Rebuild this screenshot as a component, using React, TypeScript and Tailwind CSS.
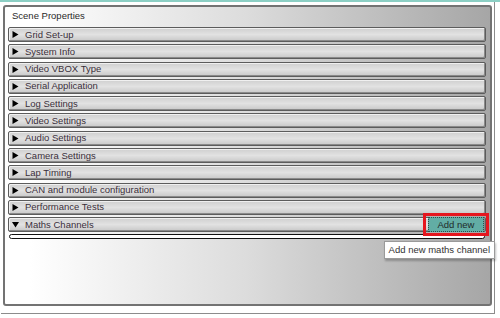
import React from 'react';

const sections = [
  "Grid Set-up",
  "System Info",
  "Video VBOX Type",
  "Serial Application",
  "Log Settings",
  "Video Settings",
  "Audio Settings",
  "Camera Settings",
  "Lap Timing",
  "CAN and module configuration",
  "Performance Tests",
];

const Arrow: React.FC<{ open?: boolean }> = ({ open }) => (
  <svg width="7" height="7" viewBox="0 0 7 7" className="ml-[3px] mr-[6px]">
    {open ? <path d="M0 1 L7 1 L3.5 6.5 Z" fill="#000" /> : <path d="M0.5 0 L6.5 3.5 L0.5 7 Z" fill="#000" />}
  </svg>
);

const Row: React.FC<{ label: string; open?: boolean; children?: React.ReactNode }> = ({ label, open, children }) => (
  <div className="relative h-[15px] flex items-center border border-[#5c5c5c] rounded-[2px] bg-linear-to-b from-[#cfcfcf] via-[#e2e2e2] to-[#c8c8c8] shadow-[inset_-1px_-1px_0_#8a8a8a,inset_1px_1px_0_#f0f0f0]">
    <Arrow open={open} />
    <span className="text-[9.5px] leading-[12px] text-[#3a2f3a]">{label}</span>
    {children}
  </div>
);

const App: React.FC = () => {
  return (
    <div className="w-[500px] h-[318px] bg-white overflow-hidden font-['Liberation_Sans',Arial,sans-serif]">
      {/* teal strip */}
      <div className="h-[2px] bg-[#8ccfc4]" />

      {/* outer frame */}
      <div className="ml-[1px] w-[494px] h-[312px] border-r border-b border-[#8c8c8c] pt-[3px] pl-[2px]">
        {/* panel */}
        <div className="w-[489px] h-[301px] border-2 border-[#737373] rounded-[3px] bg-linear-to-r from-white from-5% via-[#dcdcdc] via-50% to-[#a6a6a6]">
          <div className="h-[20px] pl-[7px] pt-[3px] text-[9.5px] leading-[12px] text-[#2a2a2a]">
            Scene Properties
          </div>

          <div className="flex flex-col gap-[2.3px] pl-[3px] pr-[4px]">
            {sections.map((s) => (
              <Row key={s} label={s} />
            ))}
            <Row label="Maths Channels" open>
              {/* highlighted button */}
              <div className="absolute right-[-4px] top-[-5px] w-[66px] h-[23px] border-[3px] border-[#e5161e] flex items-center justify-center z-10">
                <button className="w-[56px] h-[15px] bg-[#62ada5] border border-dotted border-[#2d4d4a] text-[9.5px] leading-[12px] text-[#1f2b2a]">
                  Add new
                </button>
              </div>
              {/* tooltip */}
              <div className="absolute right-[-10px] top-[23px] h-[18px] px-[4px] bg-white border border-[#9a9a9a] shadow-[1px_2px_2px_rgba(0,0,0,0.25)] text-[9.5px] leading-[16px] text-[#333] whitespace-nowrap z-20">
                Add new maths channel
              </div>
            </Row>
            <div className="h-[5px] -mt-[0.5px] ml-[1px] mr-[1px] border-[1.5px] border-[#111] rounded-full bg-white" />
          </div>
        </div>
      </div>
    </div>
  );
};

export default App;
